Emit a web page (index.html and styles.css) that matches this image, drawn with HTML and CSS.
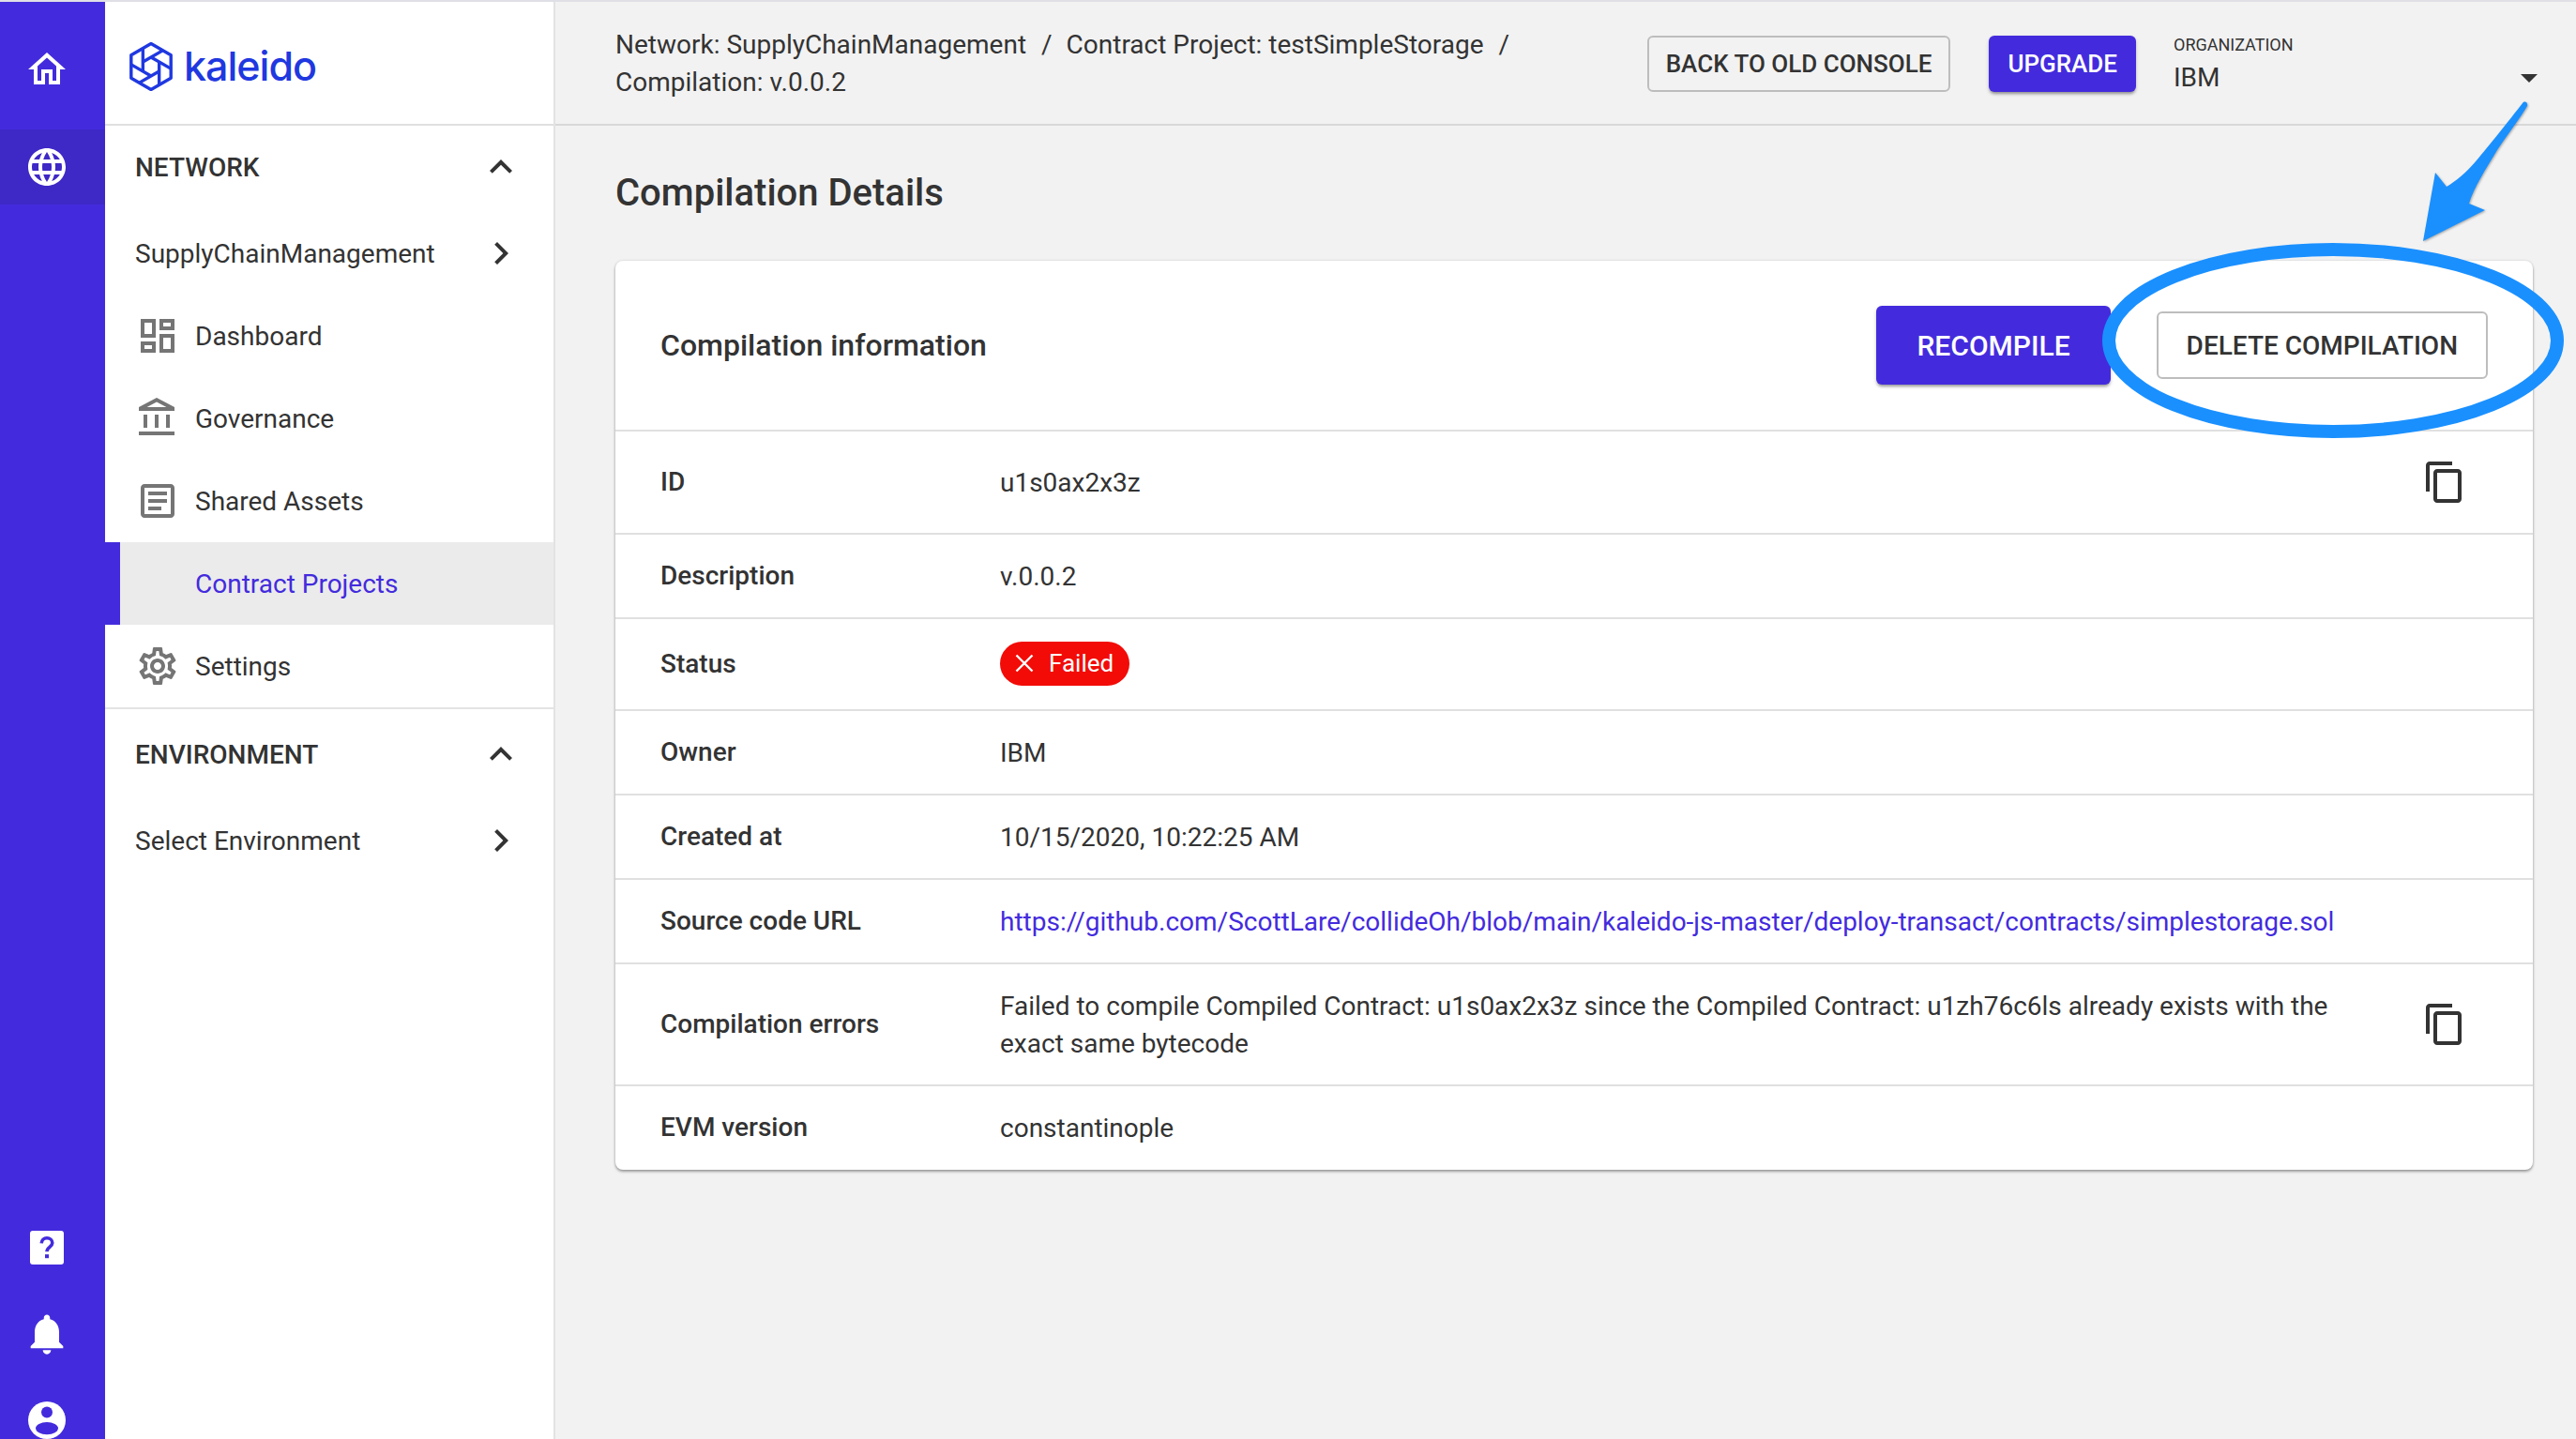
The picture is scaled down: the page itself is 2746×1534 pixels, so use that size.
FILE: index.html
```html
<!DOCTYPE html>
<html lang="en">
<head>
    <meta charset="UTF-8">
    <meta name="viewport" content="width=device-width, initial-scale=1.0">
    <title>Compilation Details</title>
    <link rel="stylesheet" href="styles.css">
</head>
<body>

<div class="app">
    <nav class="rail">
        <div class="rail-item rail-home">
            <svg class="icon" viewBox="0 0 24 24"><path d="M12 5.69l5 4.5V18h-2v-6H9v6H7v-7.81l5-4.5M12 3L2 12h3v8h6v-6h2v6h6v-8h3L12 3z"/></svg>
        </div>
        <div class="rail-item rail-active">
            <svg class="icon" viewBox="0 0 24 24"><path d="M11.99 2C6.47 2 2 6.48 2 12s4.47 10 9.99 10C17.52 22 22 17.52 22 12S17.52 2 11.99 2zm6.93 6h-2.95c-.32-1.25-.78-2.45-1.38-3.56 1.84.63 3.37 1.91 4.33 3.56zM12 4.04c.83 1.2 1.48 2.53 1.91 3.96h-3.82c.43-1.43 1.08-2.76 1.91-3.96zM4.26 14C4.1 13.36 4 12.69 4 12s.1-1.36.26-2h3.38c-.08.66-.14 1.32-.14 2 0 .68.06 1.34.14 2H4.26zm.82 2h2.95c.32 1.25.78 2.45 1.38 3.56-1.84-.63-3.37-1.9-4.33-3.56zm2.95-8H5.08c.96-1.66 2.49-2.93 4.33-3.56C8.81 5.55 8.35 6.75 8.03 8zM12 19.96c-.83-1.2-1.48-2.53-1.91-3.96h3.82c-.43 1.43-1.08 2.76-1.91 3.96zM14.34 14H9.66c-.09-.66-.16-1.32-.16-2 0-.68.07-1.35.16-2h4.68c.09.65.16 1.32.16 2 0 .68-.07 1.34-.16 2zm.25 5.56c.6-1.11 1.06-2.31 1.38-3.56h2.95c-.96 1.65-2.49 2.93-4.33 3.56zM16.36 14c.08-.66.14-1.32.14-2 0-.68-.06-1.34-.14-2h3.38c.16.64.26 1.31.26 2s-.1 1.36-.26 2h-3.38z"/></svg>
        </div>
        <div class="rail-bottom">
            <div class="rail-item">
                <svg class="icon" viewBox="0 0 24 24">
                    <rect x="3" y="3" width="18" height="18" rx="1.5"/>
                    <path class="rail-cut" d="M9.1 9.7c.1-1.6 1.3-2.8 2.9-2.8s2.9 1.1 2.9 2.6c0 2.1-2.9 2.3-2.9 4.6"/>
                    <rect class="rail-dot" x="11" y="15.6" width="2" height="2"/>
                </svg>
            </div>
            <div class="rail-item">
                <svg class="icon icon-bell" viewBox="0 0 24 24"><path d="M12 22c1.1 0 2-.9 2-2h-4c0 1.1.89 2 2 2zm6-6v-5c0-3.07-1.64-5.64-4.5-6.32V4c0-.83-.67-1.5-1.5-1.5s-1.5.67-1.5 1.5v.68C7.63 5.36 6 7.92 6 11v5l-2 2v1h16v-1l-2-2z"/></svg>
            </div>
            <div class="rail-item">
                <svg class="icon" viewBox="0 0 24 24">
                    <circle cx="12" cy="12" r="10"/>
                    <circle class="rail-dot" cx="12" cy="7.8" r="3"/>
                    <ellipse class="rail-dot" cx="12" cy="16.3" rx="6" ry="3.3"/>
                </svg>
            </div>
        </div>
    </nav>

    <aside class="sidebar">
        <div class="logo-bar">
            <svg class="logo-mark" viewBox="0 0 48 52">
                <path d="M24 1.5L45.2 13.75V38.25L24 50.5L2.8 38.25V13.75Z"/>
                <path d="M15.34 31V6.2"/>
                <path d="M15.34 31V6.2" transform="rotate(60 24 26)"/>
                <path d="M15.34 31V6.2" transform="rotate(120 24 26)"/>
                <path d="M15.34 31V6.2" transform="rotate(180 24 26)"/>
                <path d="M15.34 31V6.2" transform="rotate(240 24 26)"/>
                <path d="M15.34 31V6.2" transform="rotate(300 24 26)"/>
            </svg>
            <span class="logo-text">kaleido</span>
        </div>

        <div class="nav-group">
            <div class="nav-head">
                <span>NETWORK</span>
                <svg class="icon-dark" viewBox="0 0 24 24"><path d="M12 8l-6 6 1.41 1.41L12 10.83l4.59 4.58L18 14z"/></svg>
            </div>
            <div class="nav-head nav-sub">
                <span>SupplyChainManagement</span>
                <svg class="icon-dark" viewBox="0 0 24 24"><path d="M10 6L8.59 7.41 13.17 12l-4.58 4.59L10 18l6-6z"/></svg>
            </div>
            <div class="nav-item">
                <svg class="icon-grey" viewBox="0 0 24 24"><path d="M19 5v2h-4V5h4M9 5v6H5V5h4m10 8v6h-4v-6h4M9 17v2H5v-2h4M21 3h-8v6h8V3zM11 3H3v10h8V3zm10 8h-8v10h8V11zm-10 4H3v6h8v-6z"/></svg>
                <span>Dashboard</span>
            </div>
            <div class="nav-item">
                <svg class="icon-grey" viewBox="0 0 24 24"><path d="M6.5 10h-2v7h2v-7zm6 0h-2v7h2v-7zm8.5 9H2v2h19v-2zm-2.5-9h-2v7h2v-7zm-7-6.74L16.71 6H6.29l5.21-2.74m0-2.26L2 6v2h19V6l-9.5-5z"/></svg>
                <span>Governance</span>
            </div>
            <div class="nav-item">
                <svg class="icon-grey" viewBox="0 0 24 24"><path d="M19 5v14H5V5h14m0-2H5c-1.1 0-2 .9-2 2v14c0 1.1.9 2 2 2h14c1.1 0 2-.9 2-2V5c0-1.1-.9-2-2-2z"/><path d="M14 17H7v-2h7v2zm3-4H7v-2h10v2zm0-4H7V7h10v2z"/></svg>
                <span>Shared Assets</span>
            </div>
            <div class="nav-item nav-selected">
                <span>Contract Projects</span>
            </div>
            <div class="nav-item">
                <svg class="icon-grey" viewBox="0 0 24 24"><path d="M19.43 12.98c.04-.32.07-.64.07-.98 0-.34-.03-.66-.07-.98l2.11-1.65c.19-.15.24-.42.12-.64l-2-3.46c-.09-.16-.26-.25-.44-.25-.06 0-.12.01-.17.03l-2.49 1c-.52-.4-1.08-.73-1.69-.98l-.38-2.65C14.46 2.18 14.25 2 14 2h-4c-.25 0-.46.18-.49.42l-.38 2.65c-.61.25-1.17.59-1.69.98l-2.49-1c-.06-.02-.12-.03-.18-.03-.17 0-.34.09-.43.25l-2 3.46c-.13.22-.07.49.12.64l2.11 1.65c-.04.32-.07.65-.07.98 0 .33.03.66.07.98l-2.11 1.65c-.19.15-.24.42-.12.64l2 3.46c.09.16.26.25.44.25.06 0 .12-.01.17-.03l2.49-1c.52.4 1.08.73 1.69.98l.38 2.65c.03.24.24.42.49.42h4c.25 0 .46-.18.49-.42l.38-2.65c.61-.25 1.17-.59 1.69-.98l2.49 1c.06.02.12.03.18.03.17 0 .34-.09.43-.25l2-3.46c.12-.22.07-.49-.12-.64l-2.11-1.65zm-1.98-1.71c.04.31.05.52.05.73 0 .21-.02.43-.05.73l-.14 1.13.89.7 1.08.84-.7 1.21-1.27-.51-1.04-.42-.9.68c-.43.32-.84.56-1.25.73l-1.06.43-.16 1.13-.2 1.35h-1.4l-.19-1.35-.16-1.13-1.06-.43c-.43-.18-.83-.41-1.23-.71l-.91-.7-1.06.43-1.27.51-.7-1.21 1.08-.84.89-.7-.14-1.13c-.03-.31-.05-.54-.05-.74s.02-.43.05-.73l.14-1.13-.89-.7-1.08-.84.7-1.21 1.27.51 1.04.42.9-.68c.43-.32.84-.56 1.25-.73l1.06-.43.16-1.13.2-1.35h1.39l.19 1.35.16 1.13 1.06.43c.43.18.83.41 1.23.71l.91.7 1.06-.43 1.27-.51.7 1.21-1.07.85-.89.7.14 1.13zM12 8c-2.21 0-4 1.79-4 4s1.79 4 4 4 4-1.79 4-4-1.79-4-4-4zm0 6c-1.1 0-2-.9-2-2s.9-2 2-2 2 .9 2 2-.9 2-2 2z"/></svg>
                <span>Settings</span>
            </div>
        </div>

        <div class="nav-group nav-group-last">
            <div class="nav-head">
                <span>ENVIRONMENT</span>
                <svg class="icon-dark" viewBox="0 0 24 24"><path d="M12 8l-6 6 1.41 1.41L12 10.83l4.59 4.58L18 14z"/></svg>
            </div>
            <div class="nav-head nav-sub">
                <span>Select Environment</span>
                <svg class="icon-dark" viewBox="0 0 24 24"><path d="M10 6L8.59 7.41 13.17 12l-4.58 4.59L10 18l6-6z"/></svg>
            </div>
        </div>
    </aside>

    <main class="main">
        <header class="topbar">
            <div class="crumbs">
                <span class="crumb">Network: SupplyChainManagement<span class="crumb-sep">/</span></span>
                <span class="crumb">Contract Project: testSimpleStorage<span class="crumb-sep">/</span></span>
                <span class="crumb">Compilation: v.0.0.2</span>
            </div>
            <button class="btn btn-outline btn-small" type="button">BACK TO OLD CONSOLE</button>
            <button class="btn btn-primary btn-small" type="button">UPGRADE</button>
            <div class="org">
                <div class="org-label">ORGANIZATION</div>
                <div class="org-value"><span>IBM</span><span class="org-caret"></span></div>
            </div>
        </header>

        <section class="content">
            <h1 class="page-title">Compilation Details</h1>

            <div class="card">
                <div class="card-head">
                    <h2 class="card-title">Compilation information</h2>
                    <button class="btn btn-primary btn-large" type="button">RECOMPILE</button>
                    <button class="btn btn-outline btn-delete" type="button">DELETE COMPILATION</button>
                </div>

                <div class="row row-id">
                    <div class="row-label">ID</div>
                    <div class="row-value">u1s0ax2x3z</div>
                    <svg class="icon-dark row-copy" viewBox="0 0 24 24"><path d="M16 1H4c-1.1 0-2 .9-2 2v14h2V3h12V1zm3 4H8c-1.1 0-2 .9-2 2v14c0 1.1.9 2 2 2h11c1.1 0 2-.9 2-2V7c0-1.1-.9-2-2-2zm0 16H8V7h11v14z"/></svg>
                </div>
                <div class="row">
                    <div class="row-label">Description</div>
                    <div class="row-value">v.0.0.2</div>
                </div>
                <div class="row">
                    <div class="row-label">Status</div>
                    <div class="row-value row-chip">
                        <span class="chip">
                            <svg class="chip-x" viewBox="0 0 20 20"><path d="M1.5 1.5L18.5 18.5M18.5 1.5L1.5 18.5"/></svg>
                            Failed
                        </span>
                    </div>
                </div>
                <div class="row">
                    <div class="row-label">Owner</div>
                    <div class="row-value">IBM</div>
                </div>
                <div class="row">
                    <div class="row-label">Created at</div>
                    <div class="row-value">10/15/2020, 10:22:25 AM</div>
                </div>
                <div class="row">
                    <div class="row-label">Source code URL</div>
                    <div class="row-value"><a class="link" href="#">https://github.com/ScottLare/collideOh/blob/main/kaleido-js-master/deploy-transact/contracts/simplestorage.sol</a></div>
                </div>
                <div class="row">
                    <div class="row-label">Compilation errors</div>
                    <div class="row-value">Failed to compile Compiled Contract: u1s0ax2x3z since the Compiled Contract: u1zh76c6ls already exists with the exact same bytecode</div>
                    <svg class="icon-dark row-copy" viewBox="0 0 24 24"><path d="M16 1H4c-1.1 0-2 .9-2 2v14h2V3h12V1zm3 4H8c-1.1 0-2 .9-2 2v14c0 1.1.9 2 2 2h11c1.1 0 2-.9 2-2V7c0-1.1-.9-2-2-2zm0 16H8V7h11v14z"/></svg>
                </div>
                <div class="row row-last">
                    <div class="row-label">EVM version</div>
                    <div class="row-value">constantinople</div>
                </div>
            </div>
        </section>
    </main>
</div>

<!-- annotation drawn on top of the screenshot -->
<svg class="callout" viewBox="0 0 2746 1534">
    <path class="callout-arrow" d="M2689 110C2675 128 2652 157 2640 171C2628 185 2618 193 2608 199L2596 184L2583 257L2649 224L2632 217C2637 200 2650 180 2662 160C2674 142 2687 125 2694 113C2695 109 2691 107 2689 110Z"/>
    <ellipse class="callout-ring" cx="2487" cy="363" rx="239" ry="97"/>
</svg>

</body>
</html>
```

FILE: styles.css
```css
* {
    box-sizing: border-box;
}

html,
body {
    margin: 0;
    width: 2746px;
    height: 1534px;
    overflow: hidden;
}

body {
    position: relative;
    border-top: 2px solid #dfdfe6;
    font-family: Roboto, "Liberation Sans", sans-serif;
    font-size: 28px;
    color: #333;
    background-color: #f2f2f2;
}

svg {
    display: block;
    flex: none;
}

.app {
    display: flex;
    height: 1532px;
}

/* left purple rail */
.rail {
    display: flex;
    flex-direction: column;
    width: 112px;
    flex: none;
    background-color: #432bdd;
}

.rail-item {
    display: flex;
    align-items: center;
    justify-content: center;
    height: 92px;
    padding-right: 12px;
}

.rail-home {
    height: 136px;
    padding-top: 8px;
}

.rail-active {
    height: 80px;
    background-color: #3e28c6;
}

.rail-bottom {
    margin-top: auto;
    margin-bottom: -26px;
}

.icon {
    width: 48px;
    height: 48px;
    fill: #fff;
}

.icon-bell {
    width: 52px;
    height: 52px;
}

.rail-cut {
    fill: none;
    stroke: #432bdd;
    stroke-width: 1.8;
}

.rail-dot {
    fill: #432bdd;
}

/* sidebar */
.sidebar {
    width: 480px;
    flex: none;
    background-color: #fff;
    border-right: 2px solid #e3e3e3;
}

.logo-bar {
    display: flex;
    align-items: center;
    gap: 11px;
    height: 132px;
    padding: 8px 0 0 25px;
    border-bottom: 2px solid #e0e0e0;
}

.logo-mark {
    width: 48px;
    height: 52px;
    fill: none;
    stroke: #1f38e0;
    stroke-width: 3.4;
    stroke-linejoin: round;
}

.logo-text {
    margin-top: -2px;
    font-family: Inter, sans-serif;
    font-size: 43px;
    font-weight: 500;
    line-height: 52px;
    letter-spacing: -1px;
    color: #1f38e0;
}

.nav-group {
    border-bottom: 2px solid #e3e3e3;
}

.nav-group-last {
    border-bottom: none;
    padding-top: 4px;
}

.nav-head {
    display: flex;
    align-items: center;
    justify-content: space-between;
    height: 88px;
    padding: 0 32px;
    font-weight: 500;
}

.nav-sub {
    margin-top: 4px;
    font-weight: 400;
}

.nav-item {
    display: flex;
    align-items: center;
    gap: 16px;
    height: 88px;
    padding-left: 32px;
}

.nav-selected {
    padding-left: 80px;
    border-left: 16px solid #432bdd;
    background-color: #ebebeb;
    color: #432bdd;
}

.icon-dark {
    width: 48px;
    height: 48px;
    fill: #333;
}

.icon-grey {
    width: 48px;
    height: 48px;
    fill: #757575;
}

/* main column */
.main {
    flex: 1;
    min-width: 0;
}

.topbar {
    display: flex;
    align-items: center;
    height: 132px;
    padding: 2px 41px 0 64px;
    border-bottom: 2px solid #d8d8d8;
}

.crumbs {
    flex: 1;
    min-width: 0;
    line-height: 40px;
}

.crumb {
    white-space: nowrap;
}

.crumb-sep {
    margin: 0 8px 0 16px;
}

.btn {
    flex: none;
    font-family: Roboto, "Liberation Sans", sans-serif;
    font-weight: 500;
    border-radius: 6px;
    cursor: pointer;
}

.btn-small {
    height: 60px;
    padding: 0 18px;
    font-size: 26px;
}

.btn-primary {
    color: #fff;
    background-color: #432bdd;
    border: none;
    box-shadow: 0 3px 3px -1px rgba(0, 0, 0, 0.3), 0 2px 4px rgba(0, 0, 0, 0.15);
}

.btn-outline {
    color: #333;
    background-color: transparent;
    border: 2px solid #bdbdbd;
}

.topbar .btn-primary {
    margin: 0 40px 0 41px;
    padding: 0 20px;
}

.org {
    width: 388px;
    flex: none;
    padding-top: 2px;
}

.org-label {
    font-size: 18px;
    line-height: 22px;
}

.org-value {
    display: flex;
    align-items: center;
    justify-content: space-between;
    margin-top: 6px;
    line-height: 36px;
}

.org-caret {
    width: 0;
    height: 0;
    border-style: solid;
    border-width: 9px 9px 0;
    border-color: #333 transparent transparent;
}

.content {
    padding: 48px 46px 0 64px;
}

.page-title {
    margin: 0 0 48px;
    font-size: 40px;
    font-weight: 500;
    line-height: 48px;
}

.card {
    background-color: #fff;
    border-radius: 8px;
    box-shadow: 0 2px 3px rgba(0, 0, 0, 0.35), 0 0 3px rgba(0, 0, 0, 0.12);
}

.card-head {
    display: flex;
    align-items: center;
    height: 182px;
    padding: 0 48px;
    border-bottom: 2px solid #e0e0e0;
}

.card-title {
    flex: 1;
    margin: 0;
    font-size: 32px;
    font-weight: 500;
}

.btn-large {
    height: 84px;
    padding: 0 43px;
    font-size: 30px;
}

.btn-delete {
    height: 72px;
    margin-left: 49px;
    padding: 0 30px;
    font-size: 28px;
}

.row {
    display: grid;
    grid-template-columns: 362px 1fr 48px;
    align-items: center;
    padding: 25px 70px 23px 48px;
    border-bottom: 2px solid #e0e0e0;
}

.row-id {
    padding-top: 31px;
    padding-bottom: 29px;
}

.row-last {
    border-bottom: none;
    padding-bottom: 24px;
}

.row-label {
    padding-bottom: 4px;
    font-weight: 500;
}

.row-value {
    max-width: 1430px;
    line-height: 40px;
}

.row-copy {
    margin: -1px 0 1px;
}

.row-chip {
    display: flex;
    align-items: center;
    height: 48px;
    margin: -2px 0 2px;
}

.chip {
    display: inline-flex;
    align-items: center;
    gap: 16px;
    height: 47px;
    padding: 0 17px 0 16px;
    font-size: 26px;
    color: #fff;
    background-color: #f20b07;
    border-radius: 24px;
}

.chip-x {
    width: 20px;
    height: 20px;
    fill: none;
    stroke: #fff;
    stroke-width: 2.4;
}

.link {
    color: #432bdd;
    text-decoration: none;
}

/* blue arrow and ring */
.callout {
    position: absolute;
    left: 0;
    top: -2px;
    width: 2746px;
    height: 1534px;
    pointer-events: none;
}

.callout-arrow {
    fill: #1a90ff;
    filter: drop-shadow(1px 1px 1px rgba(0, 0, 0, 0.3));
}

.callout-ring {
    fill: none;
    stroke: #1a90ff;
    stroke-width: 14;
}
```
